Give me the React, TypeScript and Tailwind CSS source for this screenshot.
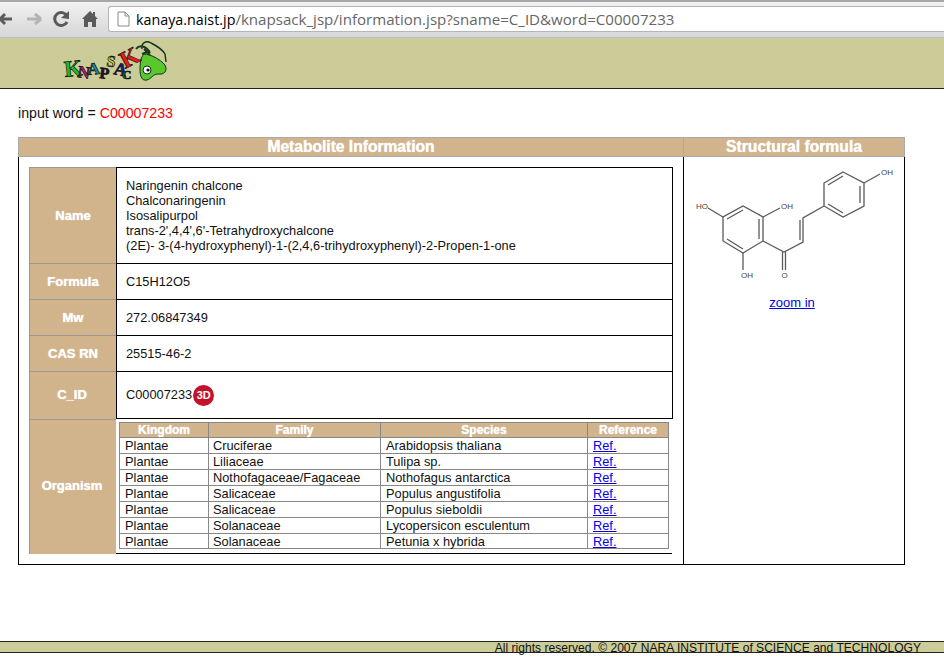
import React from "react";

const rows = [
  ["Plantae", "Cruciferae", "Arabidopsis thaliana"],
  ["Plantae", "Liliaceae", "Tulipa sp."],
  ["Plantae", "Nothofagaceae/Fagaceae", "Nothofagus antarctica"],
  ["Plantae", "Salicaceae", "Populus angustifolia"],
  ["Plantae", "Salicaceae", "Populus sieboldii"],
  ["Plantae", "Solanaceae", "Lycopersicon esculentum"],
  ["Plantae", "Solanaceae", "Petunia x hybrida"],
];

function Logo() {
  const letters: [string, number, number, number, string, number][] = [
    ["K", 65, 78, -6, "#18c030", 23],
    ["N", 77, 78, 8, "#c01880", 17],
    ["A", 88, 76, -6, "#1a8fa0", 17],
    ["P", 99, 79, 6, "#241020", 16],
    ["S", 106, 67, 8, "#d0d820", 16],
    ["A", 113, 75, 12, "#1020a0", 18],
    ["C", 122, 80, 0, "#1a6050", 13],
    ["K", 125, 70, -28, "#f01818", 24],
  ];
  return (
    <svg width="120" height="46" viewBox="60 40 120 46" className="ml-[60px] mt-[1px]">
      <path d="M142 50 C141 44 146 41 151 44 C157 47 162 50 165 55 L166 63" fill="none" stroke="#123020" strokeWidth="1.4" />
      <path d="M144 55 C150 55 160 60 165 66 C168 72 164 76 158 75 C153 75 151 80 147 81 C142 82 140 78 140 70 C140 63 141 58 144 55 Z" fill="#58c82c" stroke="#123020" strokeWidth="1" />
      {letters.map(([c, x, y, r, f, s], i) => (
        <text key={i} x={x} y={y} transform={`rotate(${r} ${x} ${y})`} fontFamily="'Liberation Serif', serif" fontWeight="700" fontSize={s} fill={f} stroke="#111" strokeWidth="0.7">{c}</text>
      ))}
      <path d="M136 50 C139 46 146 46 150 54 M144 50 L150 56 M142 55 L150 52" fill="none" stroke="#1a3a20" strokeWidth="2" />
      <ellipse cx="147" cy="71" rx="4" ry="4" fill="#fff" stroke="#123020" />
      <circle cx="148" cy="71" r="1.6" fill="#111" />
    </svg>
  );
}

function Molecule() {
  return (
    <svg width="220" height="137" viewBox="684 157 220 137" className="block shrink-0">
      <g fill="none" stroke="#5a5a5a" strokeWidth="1.3">
        <path d="M843 172 L864 183 L864 206 L843 217 L824 206 L824 183 Z" />
        <path d="M843 176 L828 185 M860 186 L860 203 M843 213 L828 204" />
        <path d="M864 183 L880 174" />
        <path d="M824 206 L803 218 L803 242 L784 252 L763 241" />
        <path d="M800 220 L800 240" />
        <path d="M763 241 L763 217 L743 206 L723 217 L723 241 L743 253 Z" />
        <path d="M759 239 L759 219 M743 210 L727 219 M727 239 L743 249" />
        <path d="M763 217 L780 208" />
        <path d="M723 217 L708 208" />
        <path d="M743 253 L743 270" />
        <path d="M782.5 252 L782.5 270 M785.5 252 L785.5 270" />
      </g>
      <g fontSize="8" fill="#444" fontFamily="'Liberation Sans', sans-serif">
        <text x="881" y="175">OH</text>
        <text x="781" y="209">OH</text>
        <text x="696" y="209">HO</text>
        <text x="741" y="278">OH</text>
        <text x="781.5" y="278">O</text>
      </g>
    </svg>
  );
}

const Label = ({ children, className = "" }: { children: React.ReactNode; className?: string }) => (
  <div className={`bg-[#d2b48c] border border-[#999] border-r-0 border-b-0 flex items-center justify-center text-white font-bold text-[13px] [text-shadow:0_0_1px_#fff] ${className}`}>
    {children}
  </div>
);

export default function App() {
  return (
    <div className="w-[944px] h-[661px] overflow-hidden bg-white flex flex-col text-[12.8px] leading-[15px] text-[#111] font-['Liberation_Sans',Arial,sans-serif]">
      <div className="h-[38px] shrink-0 bg-gradient-to-b from-[#f2f2f2] to-[#d6d6d6] border-t-2 border-t-[#a8a8a8] border-b border-b-[#bdbdbd] flex items-start pt-[4px]">
        <div className="flex items-center w-[108px] h-[26px] shrink-0">
          <svg width="108" height="24" viewBox="0 0 108 24">
            <g fill="none" strokeWidth="3">
              <path d="M-2 12 H12 M0 12 L5 7 M0 12 L5 17" stroke="#5c5c5c" />
              <path d="M27 12 H39 M41 12 L35 7 M41 12 L35 17" stroke="#b4b4b4" />
              <path d="M67 9 A6.5 6.5 0 1 0 67 15" stroke="#5a5a5a" />
            </g>
            <path d="M69 4 L69 12 L61 11 Z" fill="#5a5a5a" />
            <path d="M90 4 L82 12 L84 12 L84 20 L88 20 L88 15 L92 15 L92 20 L96 20 L96 12 L98 12 L95 9 L95 5 L93 5 L93 7 Z" fill="#5a5a5a" />
          </svg>
        </div>
        <div className="flex-1 h-[26px] bg-white border border-[#b5b5b5] rounded-l-[3px] border-r-0 flex items-center pl-[7px] text-[15px] font-['Open_Sans',sans-serif] whitespace-nowrap">
          <svg width="14" height="16" viewBox="0 0 14 16" className="mr-[6px] shrink-0">
            <path d="M2 1 H9 L13 5 V15 H2 Z M9 1 V5 H13" fill="#fff" stroke="#8a8a8a" />
          </svg>
          <span className="text-black text-[14.3px]">kanaya.naist.jp</span>
          <span className="text-[#666] text-[15.1px]">/knapsack_jsp/information.jsp?sname=C_ID&amp;word=C00007233</span>
        </div>
      </div>

      <div className="h-[51px] shrink-0 bg-[#cccc99] border-b border-[#222]">
        <Logo />
      </div>

      <div className="pl-[18px] pt-[16px] text-[14.2px] leading-[16px] h-[48px] shrink-0">
        input word = <span className="text-[#ff0000]">C00007233</span>
      </div>

      <div className="ml-[18px] w-[887px] h-[428px] shrink-0 grid grid-cols-[665px_222px] grid-rows-[20px_408px]">
        <div className="bg-[#d2b48c] border border-[#aaa] border-r-0 flex items-center justify-center pb-[2px] text-white font-bold text-[15.6px] [text-shadow:0_0_1px_#fff]">Metabolite Information</div>
        <div className="bg-[#d2b48c] border border-[#aaa] flex items-center justify-center pb-[2px] text-white font-bold text-[15.7px] [text-shadow:0_0_1px_#fff]">Structural formula</div>

        <div className="border-l border-b border-black pl-[10px] pt-[10px]">
          <div className="w-[644px] grid grid-cols-[87px_557px] grid-rows-[96px_36px_36px_36px_48px_135px]">
            <Label>Name</Label>
            <div className="border border-black border-b-0 pl-[9px] pt-[10px]">
              <div>Naringenin chalcone</div>
              <div>Chalconaringenin</div>
              <div>Isosalipurpol</div>
              <div>trans-2',4,4',6'-Tetrahydroxychalcone</div>
              <div>(2E)- 3-(4-hydroxyphenyl)-1-(2,4,6-trihydroxyphenyl)-2-Propen-1-one</div>
            </div>
            <Label>Formula</Label>
            <div className="border border-black border-b-0 pl-[9px] flex items-center">C15H12O5</div>
            <Label>Mw</Label>
            <div className="border border-black border-b-0 pl-[9px] flex items-center">272.06847349</div>
            <Label>CAS RN</Label>
            <div className="border border-black border-b-0 pl-[9px] flex items-center">25515-46-2</div>
            <Label className="pb-[2px] pr-[2px]">C_ID</Label>
            <div className="border border-black pl-[9px] flex items-center">
              <span className="-mt-[2px]">C00007233</span>
              <span className="ml-[1px] w-[21px] h-[21px] rounded-full bg-[#c4122a] text-white text-[11px] font-bold flex items-center justify-center">3D</span>
            </div>
            <Label className="border-b pb-[4px] pr-[2px]">Organism</Label>
            <div className="border-b border-black pl-[3px] pr-[4px] pt-[3px] w-[556px]">
              <div className="w-[550px] border border-[#888] border-b-0">
                <div className="grid grid-cols-[88px_172px_207px_81px] h-[14px] bg-[#d2b48c] text-white font-bold text-[12px] leading-[14px] text-center [text-shadow:0_0_1px_#fff]">
                  <div>Kingdom</div>
                  <div className="border-l border-[#888]">Family</div>
                  <div className="border-l border-[#888]">Species</div>
                  <div className="border-l border-[#888]">Reference</div>
                </div>
                {rows.map((r, i) => (
                  <div key={i} className="grid grid-cols-[88px_172px_207px_81px] h-[16px] border-t border-b-0 border-[#888] last:border-b">
                    <div className="pl-[5px]">{r[0]}</div>
                    <div className="border-l border-[#888] pl-[4px]">{r[1]}</div>
                    <div className="border-l border-[#888] pl-[5px]">{r[2]}</div>
                    <div className="border-l border-[#888] pl-[5px]"><a href="#" className="text-[#0000ee] underline">Ref.</a></div>
                  </div>
                ))}
              </div>
            </div>
          </div>
        </div>

        <div className="border-l border-r border-b border-black flex flex-col items-center">
          <Molecule />
          <a href="#" className="text-[#0000ee] underline text-[13px] leading-[15px] mt-[1px] mr-[4px]">zoom in</a>
        </div>
      </div>

      <div className="mt-[76px] h-[12px] shrink-0 bg-[#cccc99] border-y border-[#222] text-right pr-[23px] text-[12.08px] leading-[14px] whitespace-nowrap">
        <div className="-mt-[1px]">All rights reserved. © 2007 NARA INSTITUTE of SCIENCE and TECHNOLOGY</div>
      </div>
    </div>
  );
}
